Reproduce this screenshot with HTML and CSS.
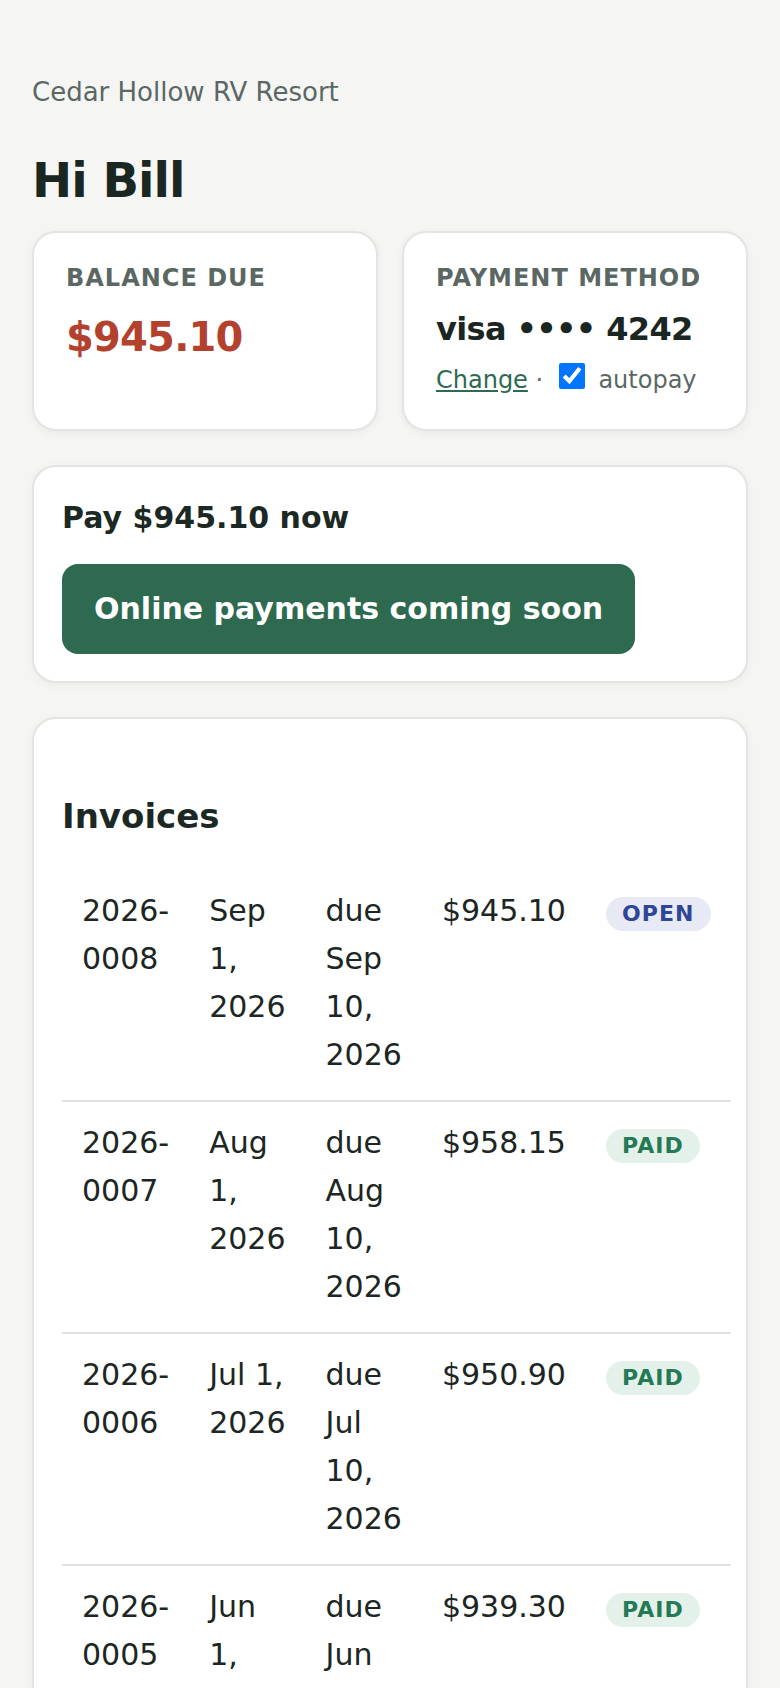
FILE: index.html
```html
<!DOCTYPE html>
<html lang="en">
<head>
<meta charset="utf-8">
<meta name="viewport" content="width=device-width, initial-scale=1">
<title>Cedar Hollow RV Resort – Billing</title>
<link rel="stylesheet" href="styles.css">
</head>
<body>
<main class="page">
  <header class="header">
    <p class="park">Cedar Hollow RV Resort</p>
    <h1 class="greeting">Hi Bill</h1>
  </header>

  <section class="stats">
    <div class="card stat">
      <div class="label">BALANCE DUE</div>
      <div class="balance">$945.10</div>
    </div>
    <div class="card stat">
      <div class="label">PAYMENT METHOD</div>
      <div class="method">visa •••• 4242</div>
      <div class="method-actions"><a href="#" class="link">Change</a> · <label class="autopay"><input class="check" type="checkbox" checked> autopay</label></div>
    </div>
  </section>

  <section class="card pay">
    <h2 class="pay-title">Pay $945.10 now</h2>
    <button class="btn" type="button">Online payments coming soon</button>
  </section>

  <section class="card invoices">
    <h2 class="section-title">Invoices</h2>
    <table class="inv-table">
      <tbody>
        <tr><td>2026-0008</td><td>Sep 1, 2026</td><td>due Sep 10, 2026</td><td>$945.10</td><td><span class="badge open">OPEN</span></td></tr>
        <tr><td>2026-0007</td><td>Aug 1, 2026</td><td>due Aug 10, 2026</td><td>$958.15</td><td><span class="badge paid">PAID</span></td></tr>
        <tr><td>2026-0006</td><td>Jul 1, 2026</td><td>due Jul 10, 2026</td><td>$950.90</td><td><span class="badge paid">PAID</span></td></tr>
        <tr><td>2026-0005</td><td>Jun 1, 2026</td><td>due Jun 10, 2026</td><td>$939.30</td><td><span class="badge paid">PAID</span></td></tr>
      </tbody>
    </table>
  </section>
</main>
</body>
</html>
```

FILE: styles.css
```css
* {
  box-sizing: border-box;
}

html,
body {
  margin: 0;
  padding: 0;
}

body {
  background: #f5f5f3;
  color: #1c2824;
  font-family: "DejaVu Sans", "Noto Sans", sans-serif;
  font-size: 30px;
  line-height: 1.6;
}

.page {
  padding: 72px 32px 40px;
}

.header {
  margin-bottom: 22px;
}

.park {
  margin: 0;
  font-size: 26px;
  line-height: 1.6;
  color: #5b6763;
}

.greeting {
  margin: 38px 0 0;
  font-size: 48px;
  line-height: 1.2;
  font-weight: 700;
  letter-spacing: -0.02em;
  color: #1a2622;
}

.card {
  background: #ffffff;
  border: 2px solid #e2e5e2;
  border-radius: 24px;
  box-shadow: 0 2px 8px rgba(20, 35, 28, 0.05);
}

.stats {
  display: grid;
  grid-template-columns: 1fr 1fr;
  gap: 24px;
}

.stat {
  padding: 26px 32px 30px;
}

.label {
  font-size: 24px;
  line-height: 1.6;
  font-weight: 700;
  letter-spacing: 1px;
  color: #5b6763;
}

.balance {
  margin-top: 7px;
  font-size: 40px;
  line-height: 1.6;
  font-weight: 700;
  letter-spacing: -0.02em;
  color: #b4412d;
}

.method {
  margin-top: 6px;
  font-size: 32px;
  line-height: 1.6;
  font-weight: 700;
  letter-spacing: -0.02em;
  color: #1a2622;
}

.method-actions {
  margin-top: 6px;
  font-size: 24px;
  line-height: 1.6;
  color: #5b6763;
}

.link {
  color: #2d6a4f;
  text-decoration: underline;
}

.check {
  width: 26px;
  height: 26px;
  margin: 2px 6px 0 8px;
  vertical-align: top;
}

.pay {
  margin-top: 34px;
  padding: 28px 28px 27px;
  display: flex;
  flex-direction: column;
  align-items: flex-start;
  gap: 24px;
}

.pay-title {
  margin: 0;
  font-size: 30px;
  line-height: 1.5;
  font-weight: 700;
}

.btn {
  background: #2d6a4f;
  color: #ffffff;
  border: 0;
  border-radius: 16px;
  padding: 22px 32px;
  font-family: inherit;
  font-size: 30px;
  line-height: 46px;
  font-weight: 700;
  cursor: not-allowed;
}

.invoices {
  margin-top: 34px;
  padding: 28px;
}

.section-title {
  margin: 42px 0 26px;
  font-size: 34px;
  line-height: 1.6;
  font-weight: 700;
}

.inv-table {
  width: 100%;
  border-collapse: separate;
  border-spacing: 0;
}

.inv-table td {
  padding: 17px 20px 21px;
  vertical-align: top;
  text-align: left;
  border-bottom: 2px solid #e0e3e1;
  color: #1c2622;
}

.badge {
  display: inline-block;
  padding: 4px 16px;
  border-radius: 999px;
  font-size: 22px;
  line-height: 26px;
  font-weight: 700;
  letter-spacing: 1.1px;
}

.badge.open {
  background: #e7eaf5;
  color: #2f4696;
}

.badge.paid {
  background: #e3f1ea;
  color: #237a55;
}
```
